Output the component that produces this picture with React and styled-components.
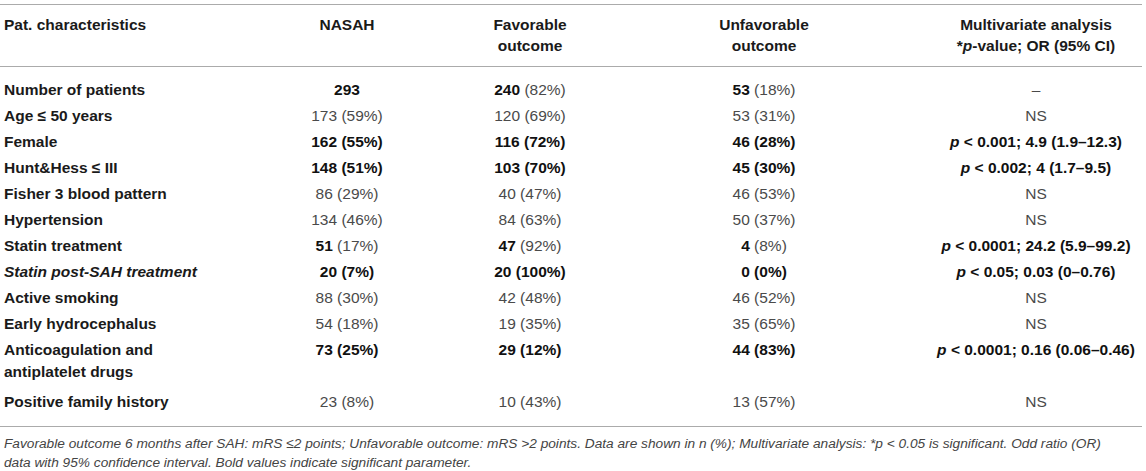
import styled, { createGlobalStyle } from 'styled-components';

const GlobalStyle = createGlobalStyle`
  body {
    margin: 0;
    background: #fff;
    font-family: 'Liberation Sans', Arial, sans-serif;
  }
`;

const COLS = [232, 230, 136, 332, 212];

// each value: [bold part, regular part]
const ROWS = [
  { label: 'Number of patients', cells: [['293', ''], ['240', ' (82%)'], ['53', ' (18%)'], ['', '–']] },
  { label: 'Age ≤ 50 years', cells: [['', '173 (59%)'], ['', '120 (69%)'], ['', '53 (31%)'], ['', 'NS']] },
  { label: 'Female', cells: [['162 (55%)', ''], ['116 (72%)', ''], ['46 (28%)', ''], ['p', ' < 0.001; 4.9 (1.9–12.3)']], stat: true },
  { label: 'Hunt&Hess ≤ III', cells: [['148 (51%)', ''], ['103 (70%)', ''], ['45 (30%)', ''], ['p', ' < 0.002; 4 (1.7–9.5)']], stat: true },
  { label: 'Fisher 3 blood pattern', cells: [['', '86 (29%)'], ['', '40 (47%)'], ['', '46 (53%)'], ['', 'NS']] },
  { label: 'Hypertension', cells: [['', '134 (46%)'], ['', '84 (63%)'], ['', '50 (37%)'], ['', 'NS']] },
  { label: 'Statin treatment', cells: [['51', ' (17%)'], ['47', ' (92%)'], ['4', ' (8%)'], ['p', ' < 0.0001; 24.2 (5.9–99.2)']], stat: true },
  { label: 'Statin post-SAH treatment', italic: true, cells: [['20 (7%)', ''], ['20 (100%)', ''], ['0 (0%)', ''], ['p', ' < 0.05; 0.03 (0–0.76)']], stat: true },
  { label: 'Active smoking', cells: [['', '88 (30%)'], ['', '42 (48%)'], ['', '46 (52%)'], ['', 'NS']] },
  { label: 'Early hydrocephalus', cells: [['', '54 (18%)'], ['', '19 (35%)'], ['', '35 (65%)'], ['', 'NS']] },
  { label: ['Anticoagulation and', 'antiplatelet drugs'], cells: [['73 (25%)', ''], ['29 (12%)', ''], ['44 (83%)', ''], ['p', ' < 0.0001; 0.16 (0.06–0.46)']], stat: true },
  { label: 'Positive family history', cells: [['', '23 (8%)'], ['', '10 (43%)'], ['', '13 (57%)'], ['', 'NS']] },
];

const Value = ({ cell, stat }) => {
  const [bold, rest] = cell;
  if (stat) {
    return (
      <Strong>
        <P>{bold}</P>
        {rest}
      </Strong>
    );
  }
  return (
    <>
      {bold && <Strong>{bold}</Strong>}
      {rest && <Regular>{rest}</Regular>}
    </>
  );
};

const App = () => {
  return (
    <>
      <GlobalStyle />
      <Wrapper>
        <Table>
          <colgroup>
            {COLS.map((w, i) => (
              <col key={i} style={{ width: w }} />
            ))}
          </colgroup>
          <Head>
            <tr>
              <Th align='left'>Pat. characteristics</Th>
              <Th>NASAH</Th>
              <Th>
                Favorable
                <br />
                outcome
              </Th>
              <Th>
                Unfavorable
                <br />
                outcome
              </Th>
              <Th>
                Multivariate analysis
                <br />*<P>p</P>-value; OR (95% CI)
              </Th>
            </tr>
          </Head>
          <Body>
            {ROWS.map((row, i) => (
              <tr key={i}>
                <Label italic={row.italic}>
                  {Array.isArray(row.label) ? (
                    <>
                      {row.label[0]}
                      <br />
                      {row.label[1]}
                    </>
                  ) : (
                    row.label
                  )}
                </Label>
                {row.cells.map((cell, j) => (
                  <Td key={j}>
                    <Value cell={cell} stat={row.stat && j === 3} />
                  </Td>
                ))}
              </tr>
            ))}
          </Body>
        </Table>
        <Note>
          Favorable outcome 6 months after SAH: mRS ≤2 points; Unfavorable outcome: mRS &gt;2 points. Data are
          shown in n (%); Multivariate analysis: *p &lt; 0.05 is significant. Odd ratio (OR)
          <br />
          data with 95% confidence interval. Bold values indicate significant parameter.
        </Note>
      </Wrapper>
    </>
  );
};

const Wrapper = styled.div`
  width: 1142px;
  padding-top: 4px;
  color: #1a1a1a;
`;
const Table = styled.table`
  width: 100%;
  table-layout: fixed;
  border-collapse: collapse;
  font-size: 15.5px;
  border-top: 1.5px solid #ababab;
  border-bottom: 1.5px solid #ababab;
`;
const Head = styled.thead`
  border-bottom: 1.5px solid #ababab;
`;
const Th = styled.th`
  text-align: ${({ align }) => align || 'center'};
  vertical-align: top;
  font-weight: 700;
  line-height: 21px;
  padding: 9px 4px 10px;
  white-space: nowrap;
`;
const Body = styled.tbody`
  tr:first-child td {
    padding-top: 12px;
  }
  tr:last-child td {
    padding-top: 6px;
    padding-bottom: 13px;
  }
`;
const Label = styled.td`
  font-weight: 700;
  font-style: ${({ italic }) => (italic ? 'italic' : 'normal')};
  line-height: 22px;
  padding: 2px 4px;
  vertical-align: top;
  white-space: nowrap;
`;
const Td = styled.td`
  text-align: center;
  line-height: 22px;
  padding: 2px 4px;
  vertical-align: top;
  white-space: nowrap;
`;
const Strong = styled.span`
  font-weight: 700;
  color: #111;
`;
const Regular = styled.span`
  font-weight: 400;
  color: #4a4a4a;
`;
const P = styled.i`
  font-style: italic;
`;
const Note = styled.p`
  margin: 7px 0 0;
  padding: 0 4px;
  font-size: 13.7px;
  line-height: 19px;
  font-style: italic;
  color: #444;
  white-space: nowrap;
`;

export default App;
